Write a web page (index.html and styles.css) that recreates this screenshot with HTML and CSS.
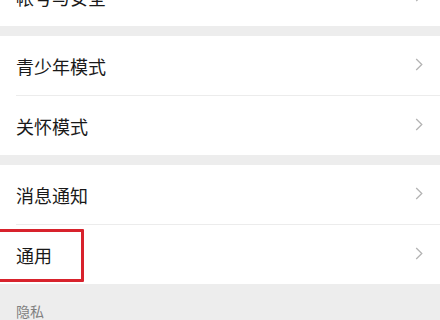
FILE: index.html
```html
<!DOCTYPE html>
<html lang="zh-CN">
<head>
    <meta charset="UTF-8">
    <meta name="viewport" content="width=device-width, initial-scale=1.0">
    <title>设置</title>
    <link rel="stylesheet" href="styles.css">
</head>
<body>
    <div class="settings">
        <div class="group group-first">
            <div class="row">
                <span class="row-title">帐号与安全</span>
                <svg class="chevron" viewBox="0 0 8 14"><polyline points="1,1 7,7 1,13"/></svg>
            </div>
        </div>

        <div class="group">
            <div class="row">
                <span class="row-title">青少年模式</span>
                <svg class="chevron" viewBox="0 0 8 14"><polyline points="1,1 7,7 1,13"/></svg>
            </div>
            <div class="row">
                <span class="row-title">关怀模式</span>
                <svg class="chevron" viewBox="0 0 8 14"><polyline points="1,1 7,7 1,13"/></svg>
            </div>
        </div>

        <div class="group">
            <div class="row">
                <span class="row-title">消息通知</span>
                <svg class="chevron" viewBox="0 0 8 14"><polyline points="1,1 7,7 1,13"/></svg>
            </div>
            <div class="row row-marked">
                <span class="row-title">通用</span>
                <svg class="chevron" viewBox="0 0 8 14"><polyline points="1,1 7,7 1,13"/></svg>
                <div class="highlight"></div>
            </div>
        </div>

        <div class="section-label">隐私</div>
    </div>
</body>
</html>
```

FILE: styles.css
```css
body {
    margin: 0;
    padding: 0;
    background-color: #ededed;
    font-family: "Noto Sans CJK SC", "Noto Sans", sans-serif;
    color: #191919;
    overflow: hidden;
}

.settings {
    display: flex;
    flex-direction: column;
    gap: 10px;
}

.group {
    background: #fff;
}

.group-first {
    margin-top: -33px;
}

.row {
    position: relative;
    display: flex;
    align-items: center;
    justify-content: space-between;
    height: 59px;
    padding: 0 17px 0 16px;
}

.row + .row::before {
    content: "";
    position: absolute;
    top: -1px;
    left: 16px;
    right: 0;
    height: 1px;
    background: #ececec;
}

.row + .row {
    margin-top: 1px;
}

.row-title {
    font-size: 18px;
    line-height: 1;
}

.chevron {
    width: 8px;
    height: 13px;
    margin-bottom: 3px;
    fill: none;
    stroke: #b4b4b4;
    stroke-width: 1.4;
}

.highlight {
    position: absolute;
    left: -3px;
    top: 4px;
    width: 81px;
    height: 47px;
    border: 3px solid #d8222c;
    border-radius: 1px;
}

.section-label {
    margin-top: -10px;
    padding: 19px 16px;
    font-size: 14px;
    color: #7f7f7f;
    line-height: 16px;
}
```
